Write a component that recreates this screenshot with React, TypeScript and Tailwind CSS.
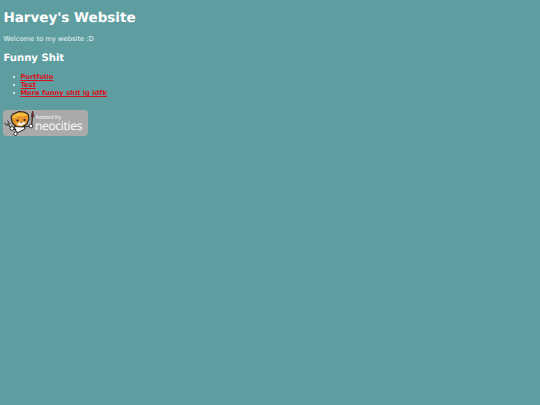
const links = ["Portfolio", "Test", "More funny shit ig idfk"];

const Mascot = () => (
  <svg viewBox="0 0 32 26" className="absolute left-0 top-0 w-[32px] h-[26px]">
    {/* paintbrush */}
    <path d="M28.5 16 L29.5 6" stroke="#4a3a2e" strokeWidth="1.5" fill="none" />
    <path d="M28.2 6.5 L29.6 1 L31 6.5 Z" fill="#8f2d38" stroke="#2a2222" strokeWidth="0.6" />
    {/* fork */}
    <path d="M8 18 L4.5 13.5" stroke="#333" strokeWidth="1.2" />
    <path d="M1.5 12.5 L3.5 15.5 L6.5 13.5 L4.5 10.5" stroke="#333" strokeWidth="1" fill="none" />
    {/* body */}
    <path d="M11 17 L21 15 L22 19 L14 23 Z" fill="#f4f4f4" stroke="#222" strokeWidth="1" />
    <path d="M20 17 L27 16" stroke="#222" strokeWidth="1.2" />
    <path d="M10 18 L13 20" stroke="#222" strokeWidth="1.2" />
    <circle cx="28" cy="16" r="1.9" fill="#fff" stroke="#222" strokeWidth="0.9" />
    <circle cx="9" cy="18.5" r="1.9" fill="#fff" stroke="#222" strokeWidth="0.9" />
    <circle cx="12.5" cy="23.8" r="1.7" fill="#fff" stroke="#222" strokeWidth="0.9" />
    {/* head */}
    <path
      d="M8 7 L10 4 L16 1.5 L21 2 L25 4 L26 9 L24 14 L19 17 L13 16.5 L9.5 13 Z"
      fill="#e8952b"
      stroke="#222"
      strokeWidth="1.1"
      strokeLinejoin="round"
    />
    {/* hat */}
    <path d="M9 7 L15 3 L22 3.5 L24.5 5 L22 6 L15 6 L10.5 8.5 Z" fill="#f2c23e" />
    <path d="M14 13.5 L17.5 12 L22 12 L22.5 13.5 L19 15.8 L15 15.5 Z" fill="#fbeed2" />
    <circle cx="14.5" cy="10.5" r="1.1" fill="#222" />
    <circle cx="21.5" cy="10" r="1.1" fill="#222" />
    <path d="M17.5 12.3 L19.5 12.3 L18.5 13.4 Z" fill="#222" />
  </svg>
);

export default function App() {
  return (
    <div className="min-h-[405px] bg-[#5f9ea0] px-[3.4px] pt-[9px] text-white font-['DejaVu_Sans',sans-serif] text-[6.75px] leading-[8px] [text-rendering:geometricPrecision]">
      <h1 className="text-[13.5px] leading-[18px] font-bold">Harvey's Website</h1>

      <p className="mt-[7.5px] text-[#eaf3f3]">Welcome to my website :D</p>

      <h2 className="mt-[10px] text-[10.1px] leading-[12px] font-bold">Funny Shit</h2>

      <ul className="mt-[8.5px] pl-[9.4px]">
        {links.map((link) => (
          <li key={link} className="flex h-[8px] items-center gap-[5px] leading-[8px]">
            <span className="h-[2.6px] w-[2.6px] rounded-full bg-white" />
            <a
              href="#"
              className="text-[#d8101c] font-bold underline decoration-[0.5px] underline-offset-[1px]"
            >
              {link}
            </a>
          </li>
        ))}
      </ul>

      <a
        href="#"
        className="relative mt-[12.5px] block w-[85px] h-[26px] rounded-[4px] bg-[#aaaaaa]"
      >
        <Mascot />
        <span className="absolute left-[32.5px] top-[4.5px] text-[5.5px] leading-[6px] text-white font-['Open_Sans',sans-serif]">
          hosted by
        </span>
        <span className="absolute left-[31.5px] top-[11px] text-[12px] leading-[10px] tracking-[-0.3px] text-white font-['Open_Sans',sans-serif]">
          neocities
        </span>
      </a>
    </div>
  );
}
